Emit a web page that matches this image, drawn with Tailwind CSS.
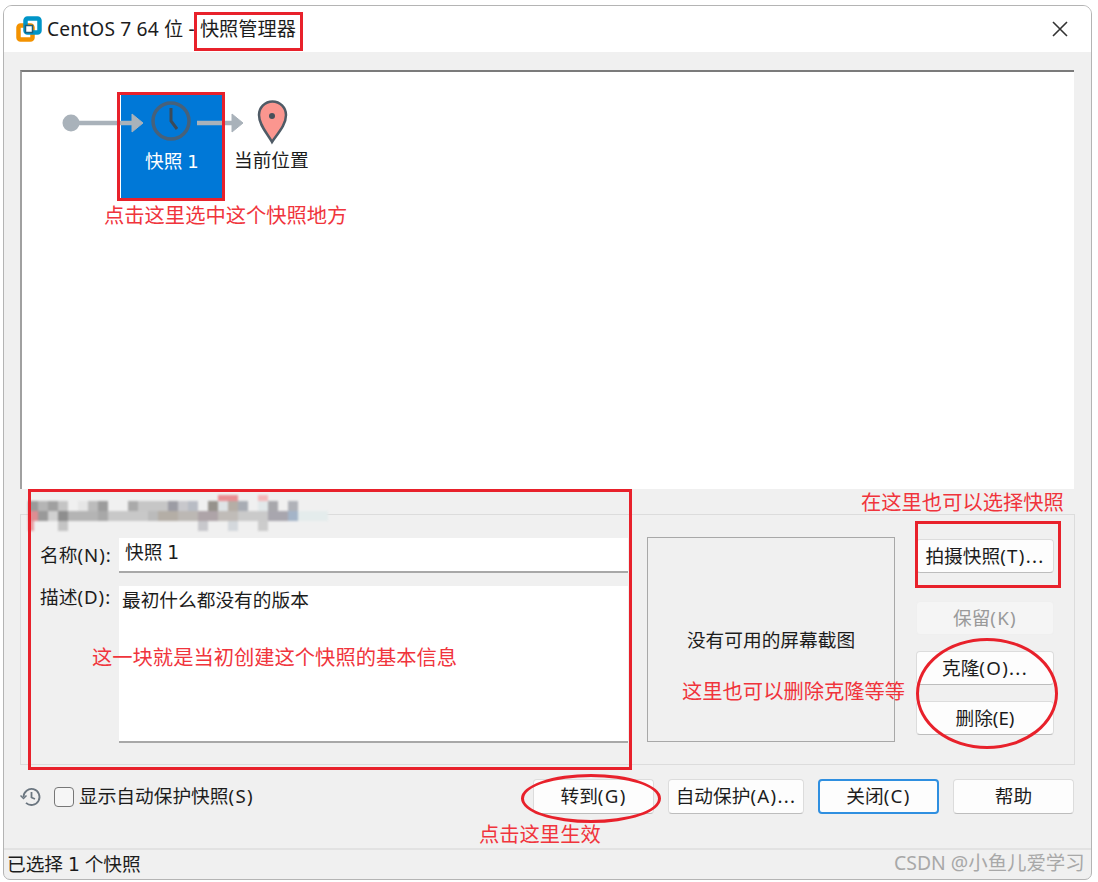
<!DOCTYPE html>
<html lang="zh-CN">
<head>
  <meta charset="UTF-8" />
  <title>快照管理器</title>
  <script src="https://cdn.jsdelivr.net/npm/@tailwindcss/browser@4"></script>
</head>
<body class="relative w-[1098px] h-[882px] overflow-hidden bg-white font-['Noto_Sans','Noto_Sans_CJK_SC',sans-serif] text-[18.7px] text-[#1c1c1c]">

  <!-- window -->
  <div class="absolute left-[3px] top-[5px] w-[1089px] h-[875px] flex flex-col bg-[#f0f0f0] border border-[#b4b4b4] rounded-t-[9px] rounded-b-[7px] overflow-hidden">

    <!-- title bar -->
    <div class="h-[46px] shrink-0 bg-white flex items-center pl-[12px] pr-[23px]">
      <svg class="w-[26px] h-[26px] mr-[5px]" viewBox="0 0 26 26">
        <rect x="2.500" y="9.500" width="14" height="14" rx="2" fill="none" stroke="#f39200" stroke-width="4.500"/>
        <rect x="9.500" y="2.500" width="14" height="14" rx="2" fill="none" stroke="#0095c8" stroke-width="4.500"/>
        <rect x="9.500" y="9.500" width="7" height="7" fill="#fff" stroke="#1a5f80" stroke-width="1.500"/>
      </svg>
      <span class="whitespace-nowrap text-[19.2px]"><span class="tracking-[0.15px]">CentOS 7 64 位 - </span>快照管理器</span>
      <svg class="ml-auto w-[16px] h-[16px]" viewBox="0 0 16 16" fill="none" stroke="#333" stroke-width="1.6"><path d="M1 1l14 14M15 1L1 15"/></svg>
    </div>

    <div class="flex-1 flex flex-col pl-[16px] pr-[17px] pt-[18px]">
      <!-- snapshot tree -->
      <div class="relative h-[419px] w-[1054px] bg-white border-t-2 border-l-2 border-t-[#7b7b7b] border-l-[#a0a0a0]">
        <div class="absolute left-[99px] top-[23px] w-[102px] h-[105px] bg-[#0078d7]"></div>
        <svg class="absolute left-0 top-0" width="300" height="90" viewBox="0 0 300 90" fill="none">
          <circle cx="49" cy="51" r="8.500" fill="#a9b2ba"/>
          <path d="M49 51h62" stroke="#a9b2ba" stroke-width="4.500"/>
          <path d="M110 42l11 9-11 9z" fill="#a9b2ba" stroke="#a9b2ba" stroke-width="1"/>
          <circle cx="149" cy="49" r="18" stroke="#47617a" stroke-width="3.500"/>
          <path d="M149 36v13l6 8" stroke="#3b4a58" stroke-width="3"/>
          <path d="M175 51h36" stroke="#a9b2ba" stroke-width="4.500"/>
          <path d="M210 42l11 9-11 9z" fill="#a9b2ba" stroke="#a9b2ba" stroke-width="1"/>
          <path d="M250 70c-5-9-13-17-13-27a13.500 13.500 0 0 1 27 0c0 10-8 18-14 27z" fill="#fb968f" stroke="#4f5b66" stroke-width="2.500"/>
          <circle cx="250" cy="44" r="3" fill="#47505a"/>
        </svg>
        <span class="absolute left-[123px] top-[75px] text-white whitespace-nowrap">快照 <span class="font-['DejaVu_Sans'] text-[18px]">1</span></span>
        <span class="absolute left-[212px] top-[74px] whitespace-nowrap">当前位置</span>
      </div>

      <!-- details group -->
      <div class="mt-[25px] h-[251px] w-[1055px] border border-[#dcdcdc] pl-[19px] pt-[23px] flex">
        <div class="w-[588px] grid grid-cols-[79px_509px] grid-rows-[35px_157px] gap-y-[13px] shrink-0">
          <label class="self-center whitespace-nowrap">名称<span class="tracking-[1px]">(N):</span></label>
          <div class="bg-white border-b-2 border-[#a8a8a8] pl-[6px] pt-[1px] leading-[26px]">快照 <span class="font-['DejaVu_Sans']">1</span></div>
          <label class="leading-[22px] whitespace-nowrap">描述<span class="tracking-[1px]">(D):</span></label>
          <div class="bg-white border-b-2 border-[#a8a8a8] pl-[3px] pt-[1px] leading-[26px]">最初什么都没有的版本</div>
        </div>
        <div class="ml-[19px] -mt-[1px] w-[248px] h-[205px] shrink-0 border border-[#a8a8a8] flex items-center justify-center pt-[2px]">没有可用的屏幕截图</div>
        <div class="ml-[21px] w-[138px] flex flex-col pt-[1px]">
          <button class="h-[34px] bg-[#fdfdfd] border border-[#dcdcdc] border-b-[#bdbdbd] rounded-[4px] whitespace-nowrap">拍摄快照<span class="tracking-[1.3px]">(T)...</span></button>
          <button class="mt-[28px] h-[34px] bg-[#f5f5f5] border border-[#efefef] rounded-[4px] text-[#9a9a9a]">保留<span class="tracking-[1.3px]">(K)</span></button>
          <button class="mt-[16px] h-[34px] bg-[#fdfdfd] border border-[#dcdcdc] border-b-[#bdbdbd] rounded-[4px]">克隆<span class="tracking-[1.3px]">(O)...</span></button>
          <button class="mt-[16px] h-[34px] bg-[#fdfdfd] border border-[#dcdcdc] border-b-[#bdbdbd] rounded-[4px]">删除(E)</button>
        </div>
      </div>

      <!-- bottom row -->
      <div class="mt-[14px] flex items-center">
        <svg class="w-[22px] h-[22px] text-[#6b7680]" viewBox="0 0 22 22" fill="none" stroke="currentColor" stroke-width="1.800">
          <path d="M3.500 11a8 8 0 1 1 2.500 5.800"/>
          <path d="M0.500 9.500l3 3 3-3" stroke-width="1.500"/>
          <path d="M11.500 6v5.500l3.500 1.500"/>
        </svg>
        <span class="ml-[12px] w-[20px] h-[20px] bg-[#f6f6f6] border border-[#777] rounded-[4px]"></span>
        <span class="ml-[5px] whitespace-nowrap">显示自动保护快照<span class="tracking-[1.3px]">(S)</span></span>
        <div class="ml-auto flex gap-[14px]">
          <button class="w-[121px] h-[35px] bg-[#fdfdfd] border border-[#dcdcdc] border-b-[#bdbdbd] rounded-[4px]">转到<span class="tracking-[1.3px]">(G)</span></button>
          <button class="w-[136px] h-[35px] bg-[#fdfdfd] border border-[#dcdcdc] border-b-[#bdbdbd] rounded-[4px] whitespace-nowrap">自动保护<span class="tracking-[1.3px]">(A)...</span></button>
          <button class="w-[121px] h-[35px] bg-[#fdfdfd] border-2 border-[#2f8fe0] rounded-[4px]">关闭<span class="tracking-[1.3px]">(C)</span></button>
          <button class="w-[121px] h-[35px] bg-[#fdfdfd] border border-[#dcdcdc] border-b-[#bdbdbd] rounded-[4px]">帮助</button>
        </div>
      </div>
    </div>

    <!-- status bar -->
    <div class="h-[31px] shrink-0 border-t-2 border-[#e2e2e2] pl-[3px] leading-[28px] whitespace-nowrap">已选择 <span class="font-['DejaVu_Sans']">1</span> 个快照</div>
  </div>

  <!-- pixelated smudge over the group title -->
  <svg class="absolute left-[28px] top-[495px] blur-[1px]" width="320" height="40" viewBox="0 0 320 40">
    <g>
      <rect x="190" y="0" width="20" height="6" fill="#e98f93"/><rect x="230" y="0" width="10" height="6" fill="#f3b9bb"/>
      <rect x="0" y="6" width="10" height="10" fill="#9a9a9a"/><rect x="10" y="6" width="10" height="10" fill="#b5b5b5"/><rect x="20" y="6" width="10" height="10" fill="#a0a0a0"/><rect x="30" y="6" width="10" height="10" fill="#c4c4c4"/><rect x="50" y="6" width="10" height="10" fill="#e6e6e6"/><rect x="60" y="6" width="10" height="10" fill="#bcbcbc"/><rect x="70" y="6" width="10" height="10" fill="#9c9c9c"/><rect x="100" y="6" width="10" height="10" fill="#aaaaaa"/><rect x="110" y="6" width="30" height="10" fill="#c6c6c6"/><rect x="140" y="6" width="10" height="10" fill="#9c9ca4"/><rect x="150" y="6" width="10" height="10" fill="#c8c8cc"/><rect x="160" y="6" width="10" height="10" fill="#b8bcc4"/><rect x="180" y="6" width="10" height="10" fill="#96928c"/><rect x="190" y="6" width="10" height="10" fill="#dfe4e6"/><rect x="200" y="6" width="10" height="10" fill="#b5aea6"/><rect x="210" y="6" width="10" height="10" fill="#a8acb4"/><rect x="230" y="6" width="10" height="10" fill="#e2e8ea"/><rect x="240" y="6" width="10" height="10" fill="#a8a8ac"/><rect x="260" y="6" width="10" height="10" fill="#b0b2b8"/>
      <rect x="0" y="16" width="10" height="10" fill="#de8d92"/><rect x="10" y="16" width="10" height="10" fill="#999"/><rect x="20" y="16" width="10" height="10" fill="#d0d0d0"/><rect x="30" y="16" width="10" height="10" fill="#8e8e8e"/><rect x="40" y="16" width="30" height="10" fill="#b4b4b4"/><rect x="70" y="16" width="10" height="10" fill="#a8a8a8"/><rect x="80" y="16" width="40" height="10" fill="#c8c8c8"/><rect x="120" y="16" width="10" height="10" fill="#bbb"/><rect x="130" y="16" width="20" height="10" fill="#b4aea6"/><rect x="150" y="16" width="20" height="10" fill="#bcb8b4"/><rect x="170" y="16" width="20" height="10" fill="#aea4a8"/><rect x="190" y="16" width="20" height="10" fill="#c0bcb8"/><rect x="210" y="16" width="30" height="10" fill="#cacaca"/><rect x="240" y="16" width="20" height="10" fill="#a8a6ae"/><rect x="260" y="16" width="10" height="10" fill="#a4b4c8"/><rect x="270" y="16" width="30" height="10" fill="#e4ecec"/>
      <rect x="0" y="26" width="6" height="10" fill="#e8a0a4"/><rect x="30" y="26" width="10" height="10" fill="#c4c4c4"/><rect x="170" y="26" width="10" height="10" fill="#c8c8cc"/><rect x="200" y="26" width="10" height="10" fill="#d4d8dc"/><rect x="230" y="26" width="10" height="10" fill="#cccccc"/>
    </g>
  </svg>

  <!-- red annotations -->
  <div class="absolute left-[194px] top-[12px] w-[109px] h-[39px] border-[3px] border-[#e8212b]"></div>
  <div class="absolute left-[117px] top-[92px] w-[108px] h-[109px] border-[3px] border-[#e8212b]"></div>
  <div class="absolute left-[28px] top-[489px] w-[604px] h-[281px] border-[3px] border-[#e8212b]"></div>
  <div class="absolute left-[915px] top-[521px] w-[146px] h-[67px] border-[3px] border-[#e8212b]"></div>
  <div class="absolute left-[916px] top-[638px] w-[142px] h-[111px] border-[3px] border-[#e8212b] rounded-[50%]"></div>
  <div class="absolute left-[521px] top-[774px] w-[140px] h-[49px] border-[3px] border-[#e8212b] rounded-[50%]"></div>

  <div class="text-[20.300px] text-[#f0343c] leading-[28px] whitespace-nowrap">
    <span class="absolute left-[104px] top-[201px]">点击这里选中这个快照地方</span>
    <span class="absolute left-[92px] top-[643px]">这一块就是当初创建这个快照的基本信息</span>
    <span class="absolute left-[861px] top-[488px]">在这里也可以选择快照</span>
    <span class="absolute left-[682px] top-[677px]">这里也可以删除克隆等等</span>
    <span class="absolute left-[479px] top-[820px]">点击这里生效</span>
  </div>

  <span class="absolute left-[894px] top-[851px] text-[19.4px] text-[#a8a8a8] leading-[24px] whitespace-nowrap">CSDN @小鱼儿爱学习</span>
</body>
</html>
